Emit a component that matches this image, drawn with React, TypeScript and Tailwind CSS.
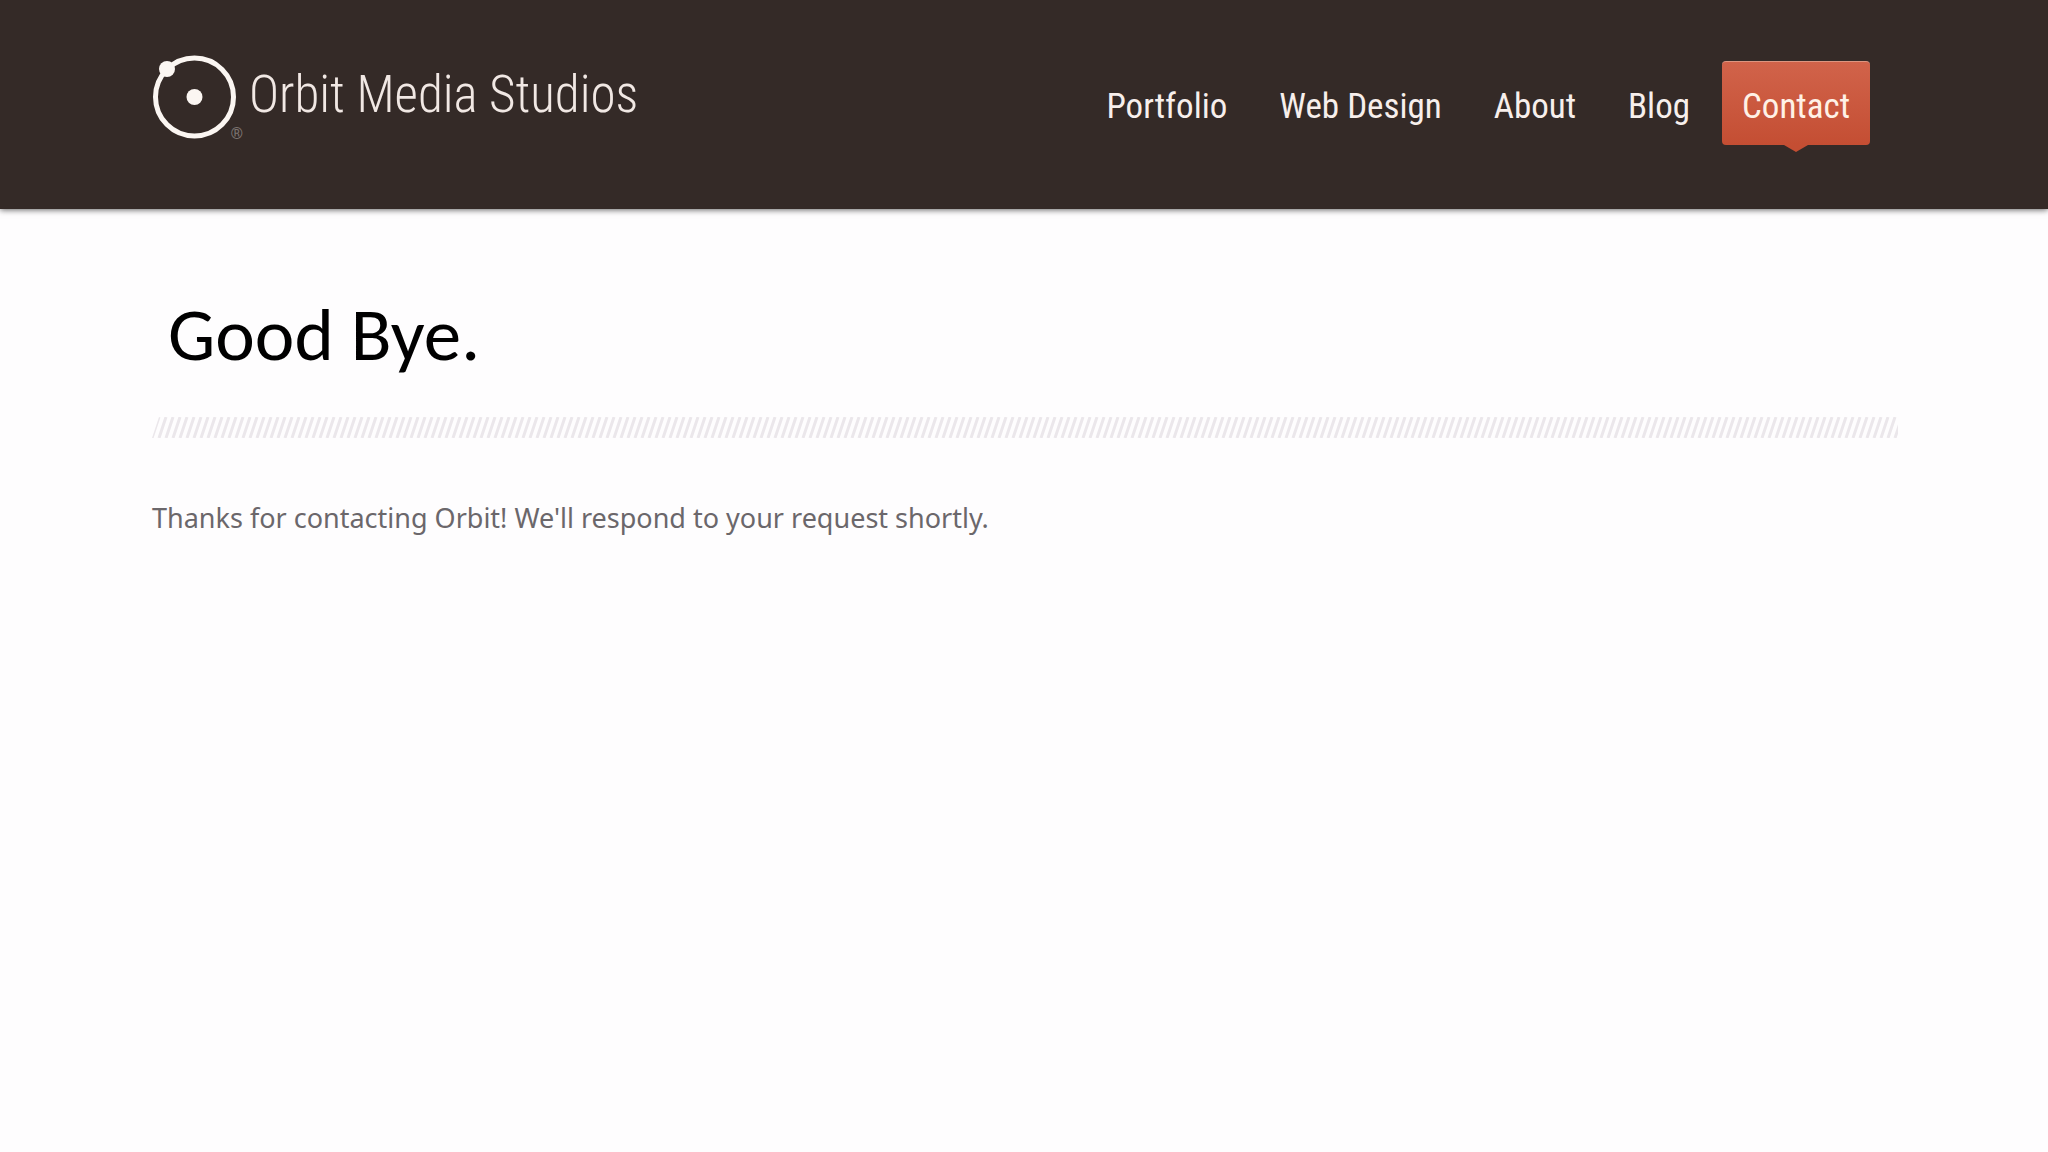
import { clsx } from "clsx";

const NAV_ITEMS = [
  { label: "Portfolio", href: "#portfolio" },
  { label: "Web Design", href: "#web-design" },
  { label: "About", href: "#about" },
  { label: "Blog", href: "#blog" },
  { label: "Contact", href: "#contact" },
];

const ACTIVE = "Contact";

function OrbitMark() {
  return (
    <svg viewBox="0 0 88 88" className="h-[88px] w-[88px] shrink-0" fill="none" aria-hidden="true">
      <circle cx="43.5" cy="43" r="39" stroke="#fbf6f2" strokeWidth="5" />
      <circle cx="43.5" cy="43" r="8" fill="#fbf6f2" />
      <circle cx="16" cy="15" r="8" fill="#fbf6f2" />
    </svg>
  );
}

function Logo() {
  return (
    <a href="#home" className="flex items-start text-[#f1e8e4]">
      <span className="relative">
        <OrbitMark />
        <span className="absolute -right-1 bottom-0 text-base leading-none text-[#7b7370]">®</span>
      </span>
      <span className="mt-[11px] ml-[10px] text-[51px] leading-[60px] font-light">Orbit Media Studios</span>
    </a>
  );
}

function NavLink({ label, href, active }: { label: string; href: string; active: boolean }) {
  return (
    <a
      href={href}
      aria-current={active ? "page" : undefined}
      className={clsx(
        "relative block rounded-sm border-t px-5 pt-[23px] pb-4 text-[35px] leading-[44px]",
        active
          ? "border-[#dd9580] bg-linear-to-b from-[#d1634a] to-[#c44e33] text-[#fff1e6]"
          : "border-transparent text-[#f7efec]",
      )}
    >
      {label}
      {active && (
        <svg viewBox="0 0 24 7" className="absolute top-full left-1/2 h-[7px] w-6 -translate-x-1/2" aria-hidden="true">
          <path d="M0 0h24L12 7z" fill="#c44e33" />
        </svg>
      )}
    </a>
  );
}

function HatchedRule() {
  return (
    <svg className="block h-[21px] w-full" aria-hidden="true">
      <defs>
        <pattern id="hatch" width="7" height="21" patternUnits="userSpaceOnUse">
          <path d="M0 21L7 0M-7 21L0 0M7 21L14 0" stroke="#ebe7eb" strokeWidth="3" />
        </pattern>
      </defs>
      <path d="M0 21L7 0H4000V21z" fill="url(#hatch)" />
    </svg>
  );
}

export default function App() {
  return (
    <div className="min-h-screen bg-[#fefdfe]">
      <header className="flex items-start justify-between bg-[#342a27] pt-[54px] pr-[178px] pb-[64px] pl-[151px] font-['Roboto_Condensed','Roboto',sans-serif] shadow-[0_1px_6px_rgba(0,0,0,0.6)]">
        <Logo />
        <nav className="mt-[7px] flex gap-3">
          {NAV_ITEMS.map(item => (
            <NavLink key={item.label} {...item} active={item.label === ACTIVE} />
          ))}
        </nav>
      </header>

      <main className="pt-[84px] pr-[150px] pl-[152px]">
        <h1 className="pl-4 font-['Carlito','Lato',sans-serif] text-[75px] leading-[84px] text-black">Good Bye.</h1>
        <div className="mt-10">
          <HatchedRule />
        </div>
        <p className="mt-[60px] font-['Noto_Sans',sans-serif] text-[27px] leading-10 text-[#6b676b]">
          Thanks for contacting Orbit! We'll respond to your request shortly.
        </p>
      </main>
    </div>
  );
}
